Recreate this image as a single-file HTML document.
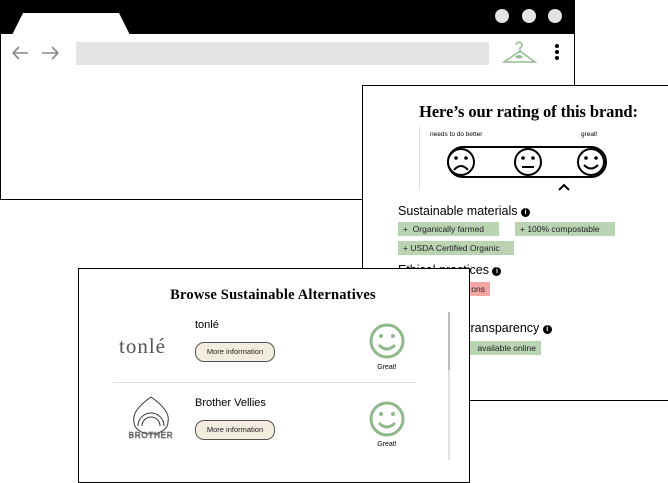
<!DOCTYPE html><html><head><style>
body{margin:0;width:668px;height:483px;position:relative;overflow:hidden;background:#fff;font-family:"Liberation Sans",sans-serif}
.a{position:absolute}
.tag{position:absolute;background:#b9d3b3;font-size:8.5px;line-height:14px;padding:0 5px;color:#222;height:14px;white-space:nowrap}
.ser{font-family:"Liberation Serif",serif;font-weight:bold}
.btn{position:absolute;left:195px;width:78px;height:18px;border:1px solid #555;border-radius:9px;background:#f3ede0;font-size:7.5px;line-height:18px;text-align:center;color:#222}
.lbl{position:absolute;left:398px;font-size:12.5px}
.i{display:inline-block;width:9px;height:9px;border-radius:5px;background:#000;color:#fff;font-size:7px;line-height:9px;text-align:center;font-weight:bold;vertical-align:1px}
</style></head><body>
<div class="a" style="left:0;top:0;width:573px;height:198px;border:1px solid #000;background:#fff"></div>
<div class="a" style="left:0;top:0;width:575px;height:34px;background:#000"></div>
<svg class="a" style="left:0;top:0" width="575" height="40"><polygon points="12,35 23,13 119,13 130,35" fill="#fff"/><circle cx="502" cy="16" r="7" fill="#e4e4e4"/><circle cx="529" cy="16" r="7" fill="#e4e4e4"/><circle cx="555" cy="16" r="7" fill="#e4e4e4"/></svg>
<svg class="a" style="top:44px;left:10px" width="60" height="18"><g stroke="#888" stroke-width="1.6" fill="none"><path d="M3 9H18M3 9L9 3M3 9L9 15"/><path d="M32 9H48M48 9L42 3M48 9L42 15"/></g></svg>
<div class="a" style="left:76px;top:42px;width:413px;height:23px;background:#e4e4e4"></div>
<svg class="a" style="left:502px;top:40px" width="36" height="28"><g stroke="#8fbd8a" stroke-width="1.5" fill="none"><path d="M14 5a3 3 0 1 1 4 3v3M18 11L2 22H33Z"/></g><path d="M13 17q4-4 8 0q-4 3-8 0z" fill="#8fbd8a"/></svg>
<div class="a" style="left:555px;top:44px;width:4px;height:4px;border-radius:2px;background:#000;box-shadow:0 6px 0 #000,0 12px 0 #000"></div>

<div class="a" style="left:362px;top:85px;width:305px;height:314px;border:1px solid #000;background:#fff"></div>
<div class="a ser" style="left:376px;top:102px;width:305px;text-align:center;font-size:16.5px;letter-spacing:-0.1px">Here’s our rating of this brand:</div>
<div class="a" style="left:419px;top:126px;width:1px;height:64px;background:#ddd"></div>
<div class="a" style="left:430px;top:131px;font-size:6.5px">needs to do better</div>
<div class="a" style="left:581px;top:131px;font-size:6.5px">great!</div>
<svg class="a" style="left:440px;top:140px" width="175" height="55"><g stroke="#000" stroke-width="2" fill="#fff"><rect x="8" y="7" width="158" height="30" rx="15"/><circle cx="21" cy="22" r="13"/><circle cx="88" cy="22" r="13"/><circle cx="151" cy="22" r="13"/></g><g fill="#000"><circle cx="16" cy="18" r="1.8"/><circle cx="26" cy="18" r="1.8"/><circle cx="83" cy="18" r="1.8"/><circle cx="93" cy="18" r="1.8"/><circle cx="146" cy="18" r="1.8"/><circle cx="156" cy="18" r="1.8"/></g><g stroke="#000" stroke-width="2" fill="none"><path d="M14 30q7-8 14 0"/><path d="M82 27H94"/><path d="M144 25q7 7 14 0"/><path d="M119 50l5-5 5 5"/></g></svg>
<div class="lbl" style="top:204px">Sustainable materials <span class="i">i</span></div>
<div class="tag" style="left:398px;top:222px;width:91px">+ &nbsp;Organically farmed</div>
<div class="tag" style="left:515px;top:222px;width:90px">+ 100% compostable</div>
<div class="tag" style="left:398px;top:241px;width:106px">+ USDA Certified Organic</div>
<div class="lbl" style="top:263px">Ethical practices <span class="i">i</span></div>
<div class="tag" style="left:420px;top:282px;width:60px;background:#f4a6a4;text-align:right">ons</div>
<div class="lbl" style="top:321px;left:392px">Supply chain transparency <span class="i">i</span></div>
<div class="tag" style="left:398px;top:341px;width:133px;text-align:right">available online</div>

<div class="a" style="left:78px;top:268px;width:390px;height:213px;border:1px solid #000;background:#fff"></div>
<div class="a ser" style="left:78px;top:287px;width:390px;text-align:center;font-size:14.5px;letter-spacing:0.2px">Browse Sustainable Alternatives</div>
<div class="a" style="left:448px;top:312px;width:2px;height:148px;background:#e2e2e2"></div>
<div class="a" style="left:448px;top:312px;width:2px;height:58px;background:#bbb"></div>
<div class="a" style="left:119px;top:334px;font-family:'Liberation Serif',serif;font-size:21px;color:#555;letter-spacing:1px">tonlé</div>
<div class="a" style="left:195px;top:319px;font-size:11px">tonlé</div>
<div class="btn" style="top:342px">More information</div>
<div class="a" style="left:113px;top:382px;width:303px;height:1px;background:#ddd"></div>
<svg class="a" style="left:126px;top:394px" width="50" height="50"><g stroke="#333" stroke-width="1" fill="none"><path d="M16 32a8 8 0 0 1 18 0"/><path d="M12 32a13 13 0 0 1 26 0"/><path d="M25 3C12 12 6 20 8 28a17 12 0 0 0 34 0C44 20 38 12 25 3z"/></g><text x="25" y="44" text-anchor="middle" font-size="8" font-family="Liberation Sans" fill="none" stroke="#555" stroke-width="0.6" letter-spacing="0.8">BROTHER</text></svg>
<div class="a" style="left:195px;top:397px;font-size:11px">Brother Vellies</div>
<div class="btn" style="top:420px">More information</div>
<svg class="a" style="left:367px;top:322px" width="40" height="140"><g stroke="#8fb98a" stroke-width="3" fill="none"><circle cx="20" cy="19" r="16"/><path d="M12 23q8 8 16 0"/><circle cx="20" cy="97" r="16"/><path d="M12 101q8 8 16 0"/></g><g fill="#8fb98a"><circle cx="14" cy="14" r="2"/><circle cx="26" cy="14" r="2"/><circle cx="14" cy="92" r="2"/><circle cx="26" cy="92" r="2"/></g></svg>
<div class="a" style="left:367px;top:364px;width:40px;text-align:center;font-size:7px">Great!</div>
<div class="a" style="left:367px;top:441px;width:40px;text-align:center;font-size:7px">Great!</div>
</body></html>
